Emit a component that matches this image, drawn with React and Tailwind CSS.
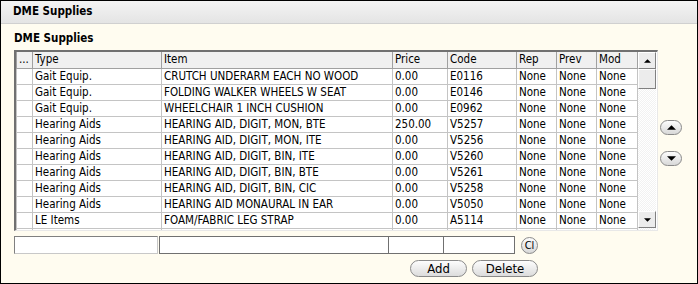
import React from 'react';

const rows = [
    ['Gait Equip.', 'CRUTCH UNDERARM EACH NO WOOD', '0.00', 'E0116'],
    ['Gait Equip.', 'FOLDING WALKER WHEELS W SEAT', '0.00', 'E0146'],
    ['Gait Equip.', 'WHEELCHAIR 1 INCH CUSHION', '0.00', 'E0962'],
    ['Hearing Aids', 'HEARING AID, DIGIT, MON, BTE', '250.00', 'V5257'],
    ['Hearing Aids', 'HEARING AID, DIGIT, MON, ITE', '0.00', 'V5256'],
    ['Hearing Aids', 'HEARING AID, DIGIT, BIN, ITE', '0.00', 'V5260'],
    ['Hearing Aids', 'HEARING AID, DIGIT, BIN, BTE', '0.00', 'V5261'],
    ['Hearing Aids', 'HEARING AID, DIGIT, BIN, CIC', '0.00', 'V5258'],
    ['Hearing Aids', 'HEARING AID MONAURAL IN EAR', '0.00', 'V5050'],
    ['LE Items', 'FOAM/FABRIC LEG STRAP', '0.00', 'A5114'],
    ['', '', '', ''],
];

const cols = [
    { label: '...', w: 'w-[16px]' },
    { label: 'Type', w: 'w-[129px]' },
    { label: 'Item', w: 'w-[231px]' },
    { label: 'Price', w: 'w-[55px]' },
    { label: 'Code', w: 'w-[69px]' },
    { label: 'Rep', w: 'w-[40px]' },
    { label: 'Prev', w: 'w-[40px]' },
    { label: 'Mod', w: 'w-[41px]' },
];

const Arrow = ({ up, size = 7 }) => (
    <svg width={size} height={Math.ceil(size / 2)} viewBox="0 0 8 4">
        <polygon points={up ? '0,4 8,4 4,0' : '0,0 8,0 4,4'} fill="#000" />
    </svg>
);

const Pill = ({ children, className }) => (
    <button
        className={`h-[17px] rounded-full border border-[#8a8a8a] bg-gradient-to-b from-[#fdfdfd] to-[#dcdcdc] text-[13px] leading-none text-black ${className}`}
    >
        {children}
    </button>
);

const App = () => {
    return (
        <div
            className="w-[698px] h-[284px] border border-black bg-[#fffcf0] text-black overflow-hidden"
            style={{ fontFamily: 'Tahoma, "DejaVu Sans Condensed", "Liberation Sans", sans-serif' }}
        >
            <div className="h-[23px] bg-gradient-to-b from-[#f4f4f4] to-[#e4e4e4] border-b border-[#d0d0d0] flex items-center pl-[12px]">
                <span className="text-[11.5px] font-bold">DME Supplies</span>
            </div>
            <div className="pl-[13px] pt-[7px] text-[11.5px] font-bold leading-[14px]">DME Supplies</div>

            <div className="flex mt-[5px]">
                <div className="ml-[13px] w-[644px] h-[181px] border-t-2 border-l-2 border-[#707070] border-b border-r border-b-[#e8e8e8] border-r-[#e8e8e8] flex overflow-hidden bg-white">
                    <div className="w-[622px] overflow-hidden">
                        <table className="border-collapse table-fixed text-[11.5px] leading-[15px]">
                            <thead>
                                <tr className="bg-[#f0f0f0]">
                                    {cols.map((c) => (
                                        <th
                                            key={c.label}
                                            className={`${c.w} h-[16px] border border-[#a0a0a0] border-t-0 px-[2px] text-left font-normal whitespace-nowrap overflow-hidden`}
                                        >
                                            {c.label}
                                        </th>
                                    ))}
                                </tr>
                            </thead>
                            <tbody>
                                {rows.map((r, i) => (
                                    <tr key={i}>
                                        <td className="h-[16px] border border-[#c4c4c4]"></td>
                                        <td className="border border-[#c4c4c4] px-[2px] whitespace-nowrap overflow-hidden">{r[0]}</td>
                                        <td className="border border-[#c4c4c4] px-[2px] whitespace-nowrap overflow-hidden">{r[1]}</td>
                                        <td className="border border-[#c4c4c4] px-[2px] whitespace-nowrap">{r[2]}</td>
                                        <td className="border border-[#c4c4c4] px-[2px] whitespace-nowrap">{r[3]}</td>
                                        <td className="border border-[#c4c4c4] px-[2px] whitespace-nowrap">{r[0] ? 'None' : ''}</td>
                                        <td className="border border-[#c4c4c4] px-[2px] whitespace-nowrap">{r[0] ? 'None' : ''}</td>
                                        <td className="border border-[#c4c4c4] px-[2px] whitespace-nowrap">{r[0] ? 'None' : ''}</td>
                                    </tr>
                                ))}
                            </tbody>
                        </table>
                    </div>
                    <div className="w-[18px] flex flex-col bg-[repeating-conic-gradient(#f2f2f2_0_25%,#ffffff_0_50%)] bg-[length:2px_2px]">
                        <div className="h-[17px] bg-[#ececec] border border-white border-r-[#808080] border-b-[#808080] flex items-center justify-center">
                            <Arrow up />
                        </div>
                        <div className="h-[20px] bg-[#ececec] border border-white border-r-[#808080] border-b-[#808080]"></div>
                        <div className="flex-1"></div>
                        <div className="h-[17px] mb-[2px] bg-[#ececec] border border-white border-r-[#808080] border-b-[#808080] flex items-center justify-center">
                            <Arrow />
                        </div>
                    </div>
                </div>
                <div className="flex flex-col items-center ml-[2px] pt-[70px] gap-[16px]">
                    <div className="w-[22px] h-[15px] rounded-full border border-[#8a8a8a] bg-gradient-to-b from-[#fdfdfd] to-[#d8d8d8] flex items-center justify-center">
                        <Arrow up size={9} />
                    </div>
                    <div className="w-[22px] h-[15px] rounded-full border border-[#8a8a8a] bg-gradient-to-b from-[#fdfdfd] to-[#d8d8d8] flex items-center justify-center">
                        <Arrow size={9} />
                    </div>
                </div>
            </div>

            <div className="flex items-center mt-[5px] ml-[13px] h-[18px]">
                <input className="w-[144px] h-[18px] bg-white border border-[#c8c8c8] border-t-[#808080] border-l-[#808080]" />
                <input className="ml-[1px] w-[230px] h-[18px] bg-white border border-[#707070]" />
                <input className="ml-[-1px] w-[56px] h-[18px] bg-white border border-[#707070]" />
                <input className="ml-[-1px] w-[72px] h-[18px] bg-white border border-[#707070]" />
                <button className="ml-[6px] w-[17px] h-[17px] rounded-full border border-[#8a8a8a] bg-gradient-to-b from-[#fdfdfd] to-[#d8d8d8] text-[11px] leading-none flex items-center justify-center">
                    Cl
                </button>
            </div>

            <div className="flex ml-[409px] mt-[6px] gap-[5px]">
                <Pill className="w-[57px]">Add</Pill>
                <Pill className="w-[66px]">Delete</Pill>
            </div>
        </div>
    );
};

export default App;
